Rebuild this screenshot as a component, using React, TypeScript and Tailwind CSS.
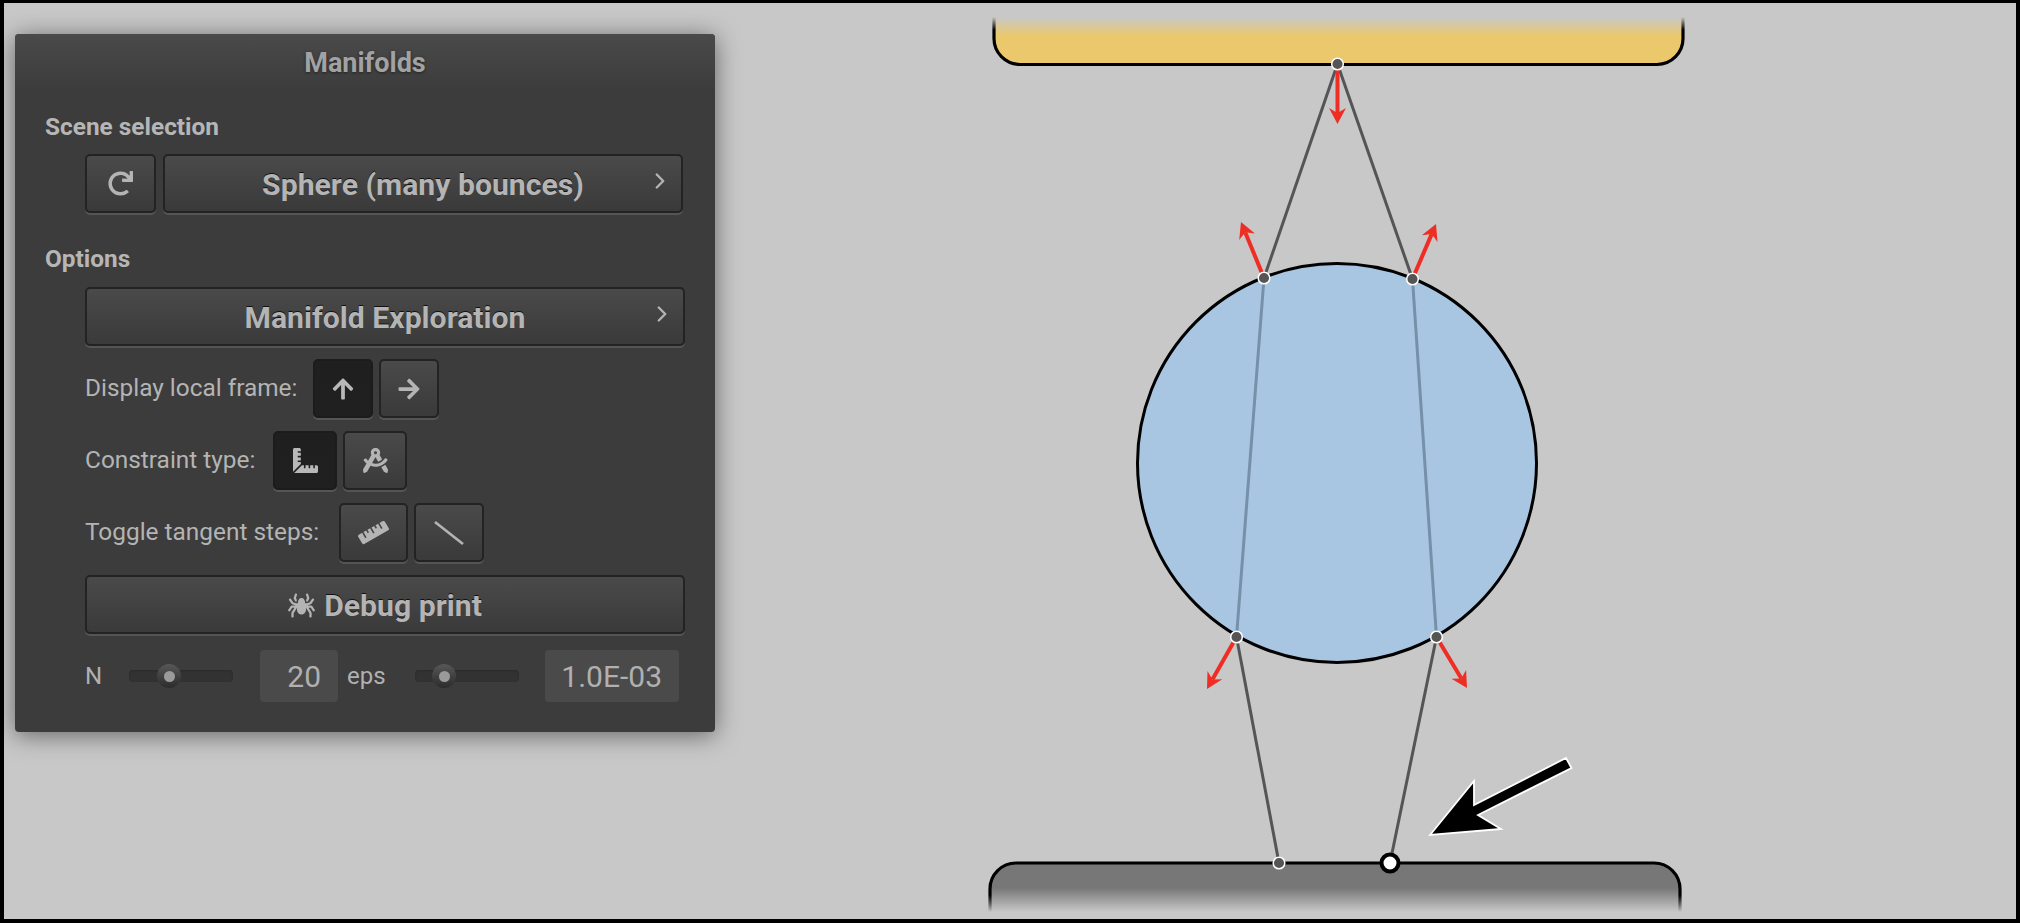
import React from "react";
import { ChevronRight } from "lucide-react";
import { FaRedo, FaArrowUp, FaArrowRight, FaRulerCombined, FaDraftingCompass, FaRuler, FaSpider } from "react-icons/fa";

const btn =
  "flex items-center justify-center rounded-[5px] border-2 border-[#232323] bg-gradient-to-b from-[#4a4a4a] to-[#3a3a3a] text-[#b4b4b4] shadow-[0_2px_0_#555555]";
const active =
  "flex items-center justify-center rounded-[5px] border-2 border-[#1c1c1c] bg-gradient-to-b from-[#1f1f1f] to-[#202020] text-[#b8b8b8] shadow-[0_2px_0_#555555]";
const bigText = "font-bold text-[#acacac] [text-shadow:0_-1px_0_#111111]";

function WideButton({ label, chevron, icon }: { label: string; chevron?: boolean; icon?: React.ReactNode }) {
  return (
    <div className={`${btn} relative h-[59px] flex-1 gap-[9px] pt-[2px] text-[30.2px] ${bigText}`}>
      {icon}
      <span>{label}</span>
      {chevron && <ChevronRight className="absolute right-[8px] top-[12px]" size={26} strokeWidth={2.2} />}
    </div>
  );
}

function Slider({ knob }: { knob: number }) {
  return (
    <div className="relative h-[12px] w-[104px] rounded-[4px] bg-[#323232] shadow-[inset_0_1px_2px_#2a2a2a]">
      <div
        className="absolute top-[-6px] flex h-[24px] w-[24px] items-center justify-center rounded-full bg-gradient-to-b from-[#585858] to-[#2c2c2c]"
        style={{ left: knob }}
      >
        <div className="h-[11px] w-[11px] rounded-full bg-[#9a9a9a]" />
      </div>
    </div>
  );
}

function NumberBox({ value, width }: { value: string; width: string }) {
  return (
    <div className={`flex h-[52px] items-center justify-end rounded-[4px] bg-[#4a4a4a] pr-[17px] text-[30px] text-[#b0b0b0] ${width}`}>
      {value}
    </div>
  );
}

function Row({ label, gap, children }: { label: string; gap: string; children: React.ReactNode }) {
  return (
    <div className={`ml-[70px] mr-[31px] mt-[13px] flex h-[59px] items-center text-[24.4px] text-[#b4b4b4] ${gap}`}>
      <span>{label}</span>
      <div className="flex gap-[6px]">{children}</div>
    </div>
  );
}

function RedArrow({ x1, y1, x2, y2 }: { x1: number; y1: number; x2: number; y2: number }) {
  const l = Math.hypot(x2 - x1, y2 - y1);
  const ux = (x2 - x1) / l;
  const uy = (y2 - y1) / l;
  const px = -uy;
  const py = ux;
  const back = 16;
  const notch = 11;
  const hw = 8.5;
  const pts = [
    [x2, y2],
    [x2 - ux * back + px * hw, y2 - uy * back + py * hw],
    [x2 - ux * notch, y2 - uy * notch],
    [x2 - ux * back - px * hw, y2 - uy * back - py * hw],
  ]
    .map((p) => p.join(","))
    .join(" ");
  return (
    <g>
      <line x1={x1} y1={y1} x2={x2 - ux * notch} y2={y2 - uy * notch} stroke="#ee2e24" strokeWidth={4} />
      <polygon points={pts} fill="#ee2e24" />
    </g>
  );
}

function Node({ x, y }: { x: number; y: number }) {
  return <circle cx={x} cy={y} r={5.8} fill="#555555" stroke="#ffffff" strokeWidth={1.5} />;
}

function Scene() {
  return (
    <svg className="block h-[923px] w-[2020px]" viewBox="0 0 2020 923">
      <defs>
        <linearGradient id="yf" gradientUnits="userSpaceOnUse" x1="0" y1="17" x2="0" y2="36">
          <stop offset="0" stopColor="#c8c8c8" />
          <stop offset="1" stopColor="#ebc86c" />
        </linearGradient>
        <linearGradient id="ys" gradientUnits="userSpaceOnUse" x1="0" y1="17" x2="0" y2="30">
          <stop offset="0" stopColor="#000000" stopOpacity="0" />
          <stop offset="1" stopColor="#000000" />
        </linearGradient>
        <linearGradient id="gf" gradientUnits="userSpaceOnUse" x1="0" y1="888" x2="0" y2="912">
          <stop offset="0" stopColor="#777777" />
          <stop offset="1" stopColor="#c8c8c8" />
        </linearGradient>
        <linearGradient id="gs" gradientUnits="userSpaceOnUse" x1="0" y1="895" x2="0" y2="912">
          <stop offset="0" stopColor="#000000" />
          <stop offset="1" stopColor="#000000" stopOpacity="0" />
        </linearGradient>
      </defs>
      <path d="M994 17V38A26 26 0 0 0 1020 64.5H1657A26 26 0 0 0 1683 38V17Z" fill="url(#yf)" />
      <path d="M994 17V38A26 26 0 0 0 1020 64.5H1657A26 26 0 0 0 1683 38V17" fill="none" stroke="url(#ys)" strokeWidth={3.2} />
      <path d="M990 912V889A26 26 0 0 1 1016 863H1654A26 26 0 0 1 1680 889V912Z" fill="url(#gf)" />
      <path d="M990 912V889A26 26 0 0 1 1016 863H1654A26 26 0 0 1 1680 889V912" fill="none" stroke="url(#gs)" strokeWidth={3.2} />

      <circle cx={1337} cy={463} r={199.5} fill="#a8c6e2" stroke="#000000" strokeWidth={3} />

      <g stroke="#555555" strokeWidth={3}>
        <line x1={1337.5} y1={64} x2={1264} y2={278} />
        <line x1={1337.5} y1={64} x2={1412.5} y2={279} />
        <line x1={1236.5} y1={637} x2={1279} y2={863} />
        <line x1={1436.5} y1={637} x2={1390} y2={863} />
      </g>
      <g stroke="#7590a8" strokeWidth={3}>
        <line x1={1264} y1={278} x2={1236.5} y2={637} />
        <line x1={1412.5} y1={279} x2={1436.5} y2={637} />
      </g>

      <RedArrow x1={1337.5} y1={64} x2={1337.5} y2={124} />
      <RedArrow x1={1264} y1={278} x2={1241} y2={222} />
      <RedArrow x1={1412.5} y1={279} x2={1436} y2={224} />
      <RedArrow x1={1236.5} y1={637} x2={1207} y2={689} />
      <RedArrow x1={1436.5} y1={637} x2={1467} y2={688} />

      <Node x={1337.5} y={64} />
      <Node x={1264} y={278} />
      <Node x={1412.5} y={279} />
      <Node x={1236.5} y={637} />
      <Node x={1436.5} y={637} />
      <Node x={1279} y={863} />
      <circle cx={1390} cy={863} r={8.5} fill="#ffffff" stroke="#000000" strokeWidth={4} />

      <polygon
        points="1430,835 1474,781 1474,805 1566,758 1571.5,768 1478,815 1501,829"
        fill="#000000"
        stroke="#ffffff"
        strokeWidth={1.8}
      />
    </svg>
  );
}

export default function App() {
  return (
    <div
      className="relative h-[923px] w-[2020px] overflow-hidden bg-[#c8c8c8] [font-family:Roboto,'Liberation_Sans',sans-serif]"
    >
      <Scene />
      <div className="pointer-events-none absolute inset-0 border-x-[4px] border-b-[4px] border-t-[3px] border-black" />

      <div className="absolute left-[15px] top-[34px] flex h-[698px] w-[700px] flex-col rounded-[4px] bg-[#3c3c3c] shadow-[0_3px_24px_rgba(0,0,0,0.5)]">
        <div className="flex h-[56px] items-center justify-center rounded-t-[4px] bg-gradient-to-b from-[#4a4a4a] to-[#3c3c3c] pt-[2px] text-[27px] font-bold text-[#a2a2a2] [text-shadow:0_1px_3px_#222222]">
          Manifolds
        </div>

        <div className="ml-[30px] mt-[20px] flex h-[34px] items-center text-[24.4px] font-bold text-[#b6b6b6]">Scene selection</div>
        <div className="ml-[70px] mr-[32px] mt-[10px] flex gap-[7px]">
          <div className={`${btn} h-[59px] w-[71px]`}>
            <FaRedo size={25} />
          </div>
          <WideButton label="Sphere (many bounces)" chevron />
        </div>

        <div className="ml-[30px] mt-[29px] flex h-[34px] items-center text-[24.4px] font-bold text-[#b6b6b6]">Options</div>
        <div className="ml-[70px] mr-[30px] mt-[11px] flex">
          <WideButton label="Manifold Exploration" chevron />
        </div>

        <Row label="Display local frame:" gap="gap-[16px]">
          <div className={`${active} h-[59px] w-[60px]`}>
            <FaArrowUp size={24} />
          </div>
          <div className={`${btn} h-[59px] w-[60px]`}>
            <FaArrowRight size={24} />
          </div>
        </Row>
        <Row label="Constraint type:" gap="gap-[18px]">
          <div className={`${active} h-[59px] w-[64px]`}>
            <FaRulerCombined size={25} />
          </div>
          <div className={`${btn} h-[59px] w-[64px]`}>
            <FaDraftingCompass size={25} />
          </div>
        </Row>
        <Row label="Toggle tangent steps:" gap="gap-[20px]">
          <div className={`${btn} h-[59px] w-[69px]`}>
            <FaRuler size={31} />
          </div>
          <div className={`${btn} h-[59px] w-[70px]`}>
            <svg width="32" height="26" viewBox="0 0 32 26">
              <line x1="2" y1="2" x2="30" y2="24" stroke="#b4b4b4" strokeWidth="2.6" />
            </svg>
          </div>
        </Row>

        <div className="ml-[70px] mr-[30px] mt-[13px] flex">
          <WideButton label="Debug print" icon={<FaSpider size={27} />} />
        </div>

        <div className="ml-[70px] mt-[16px] flex h-[52px] items-center text-[24px] text-[#b0b0b0]">
          <span className="w-[44px]">N</span>
          <Slider knob={28} />
          <div className="ml-[27px]">
            <NumberBox value="20" width="w-[78px]" />
          </div>
          <span className="ml-[9px] w-[68px]">eps</span>
          <Slider knob={17} />
          <div className="ml-[26px]">
            <NumberBox value="1.0E-03" width="w-[134px]" />
          </div>
        </div>
      </div>
    </div>
  );
}
